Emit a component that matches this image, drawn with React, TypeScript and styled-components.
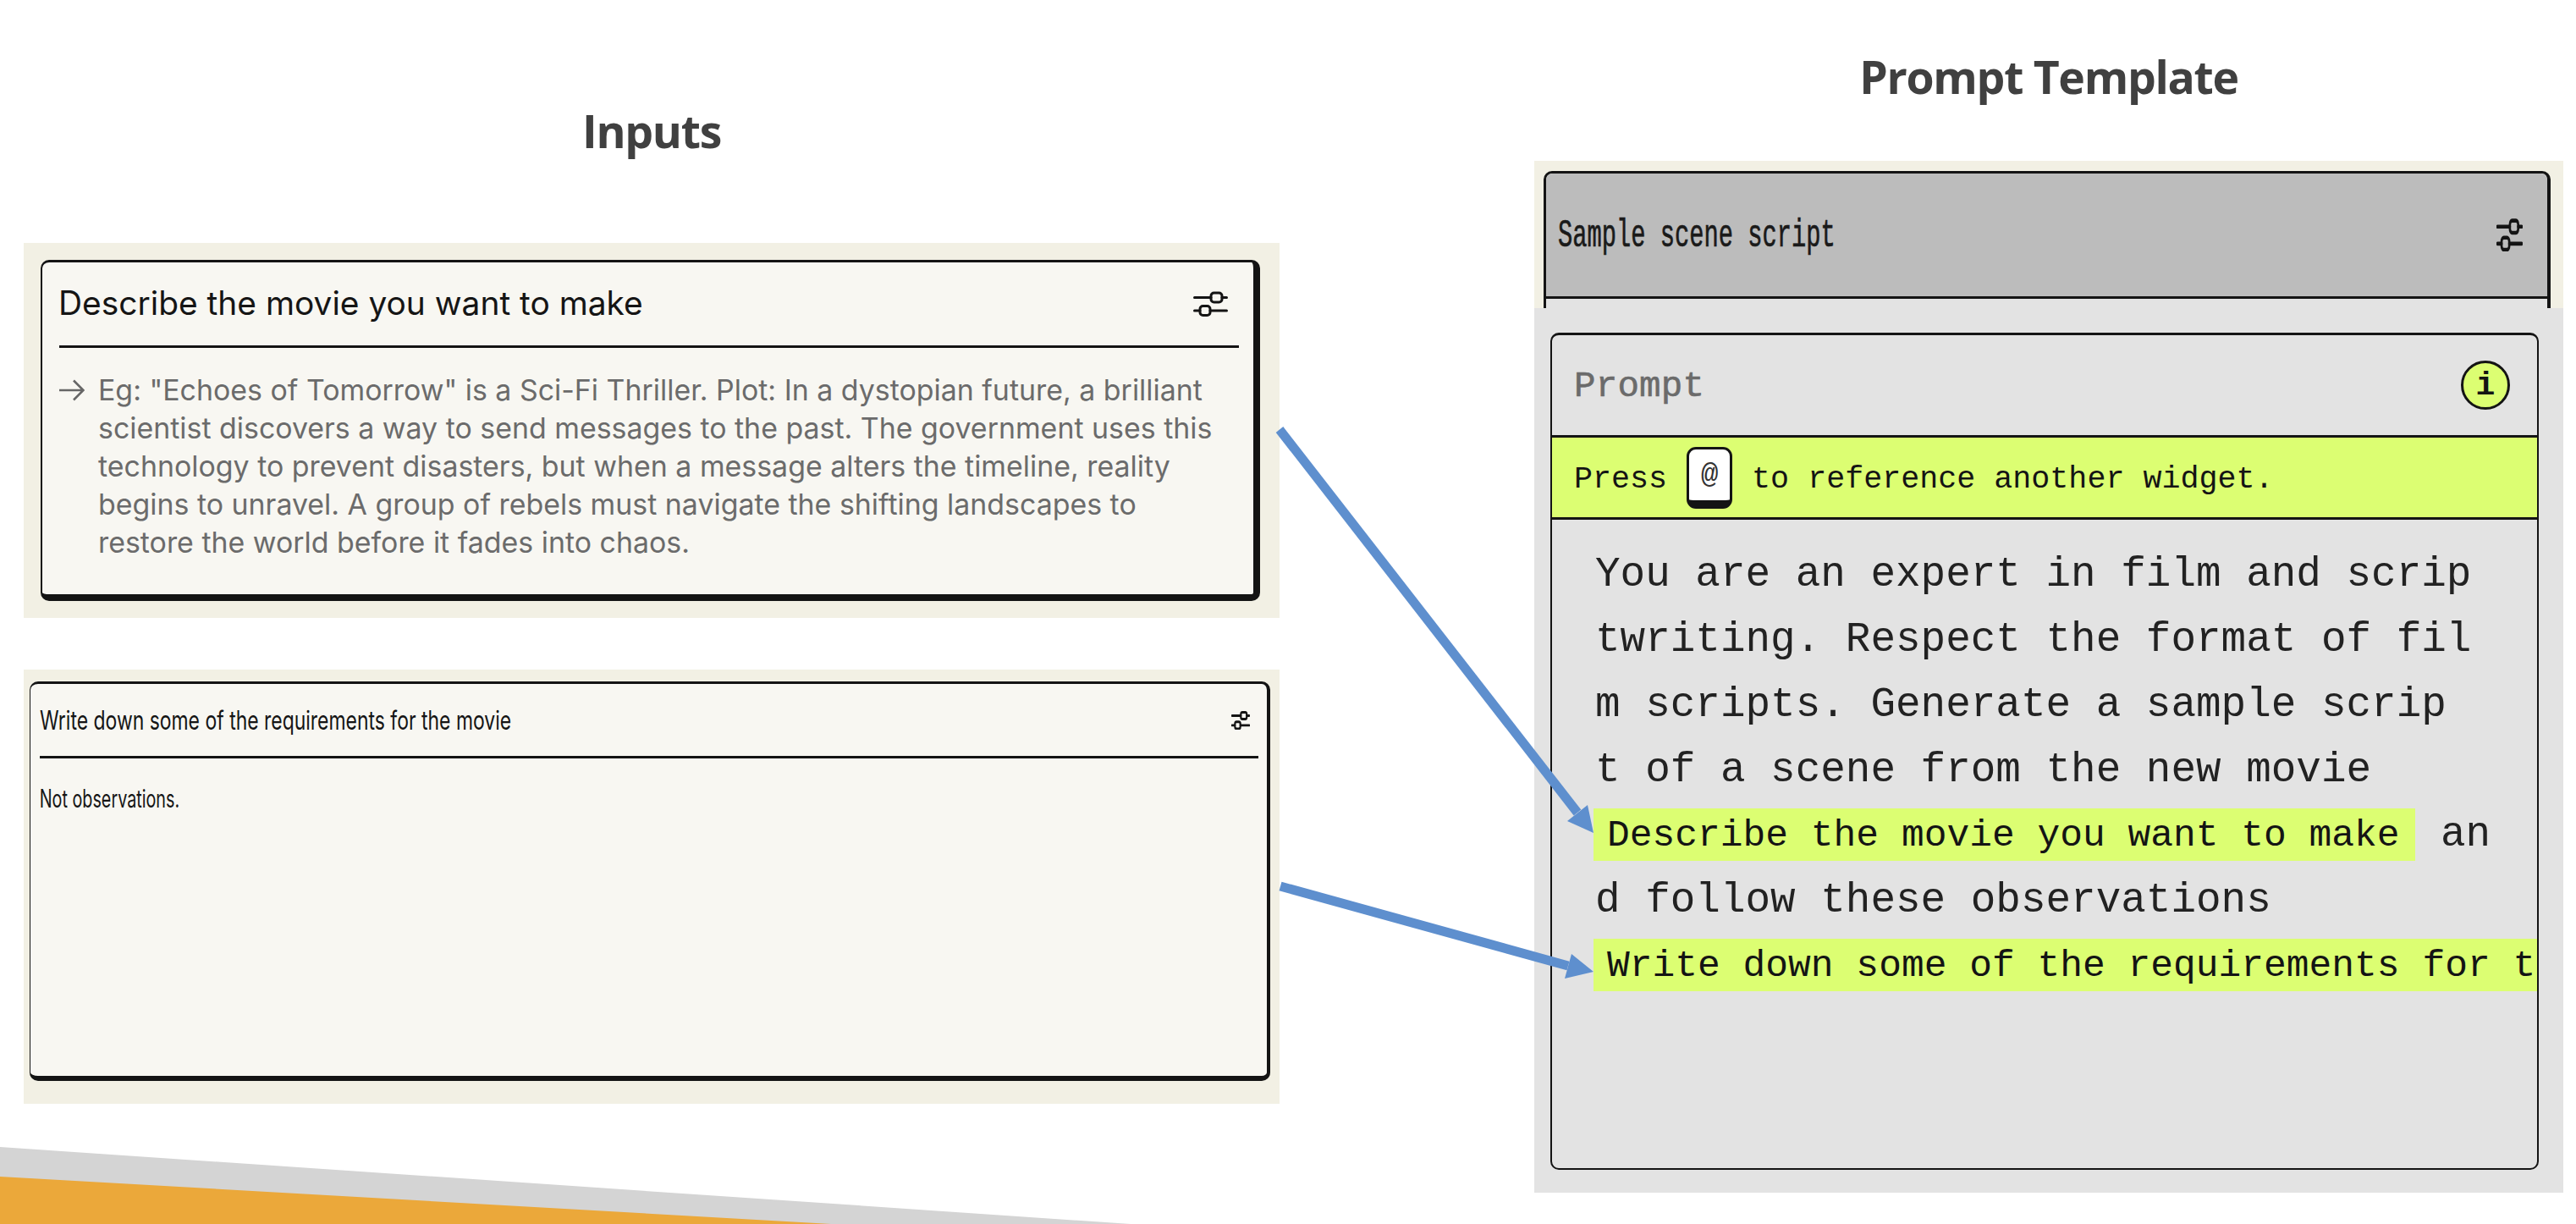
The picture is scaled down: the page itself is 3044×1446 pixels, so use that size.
import React from 'react';
import styled, { createGlobalStyle } from 'styled-components';

const GlobalStyle = createGlobalStyle`
  html, body {
    margin: 0;
    padding: 0;
    background: #ffffff;
  }
`;

const INK = '#141414';
const LIME = '#dcfe72';
const MONO = '"Liberation Mono", "DejaVu Sans Mono", monospace';

const Slide = styled.div`
  position: relative;
  width: 3044px;
  height: 1446px;
  overflow: hidden;
  background: #ffffff;
  display: flex;
  gap: 301px;
  padding-left: 28px;
  box-sizing: border-box;
`;

const LeftColumn = styled.div`
  width: 1484px;
  display: flex;
  flex-direction: column;
`;

const RightColumn = styled.div`
  width: 1216px;
  display: flex;
  flex-direction: column;
`;

const Heading = styled.h2<{ $height: number; $shift: number }>`
  margin: 0;
  height: ${(p) => p.$height}px;
  padding-top: ${(p) => p.$shift}px;
  box-sizing: border-box;
  font-family: "Open Sans", sans-serif;
  font-weight: 700;
  font-size: 53.5px;
  line-height: 68px;
  letter-spacing: -1.3px;
  color: #404040;
  text-align: center;
`;

const InputPanel = styled.section<{ $pad: string; $height: number; $mt?: number }>`
  height: ${(p) => p.$height}px;
  margin-top: ${(p) => p.$mt ?? 0}px;
  padding: ${(p) => p.$pad};
  box-sizing: border-box;
  background: #f2f0e4;
  display: flex;
`;

const InputCard = styled.div<{ $side: number; $edge: number; $foot: number }>`
  flex: 1;
  background: #f8f7f2;
  border: ${(p) => p.$side}px solid ${INK};
  border-top-width: 3px;
  border-right-width: ${(p) => p.$edge}px;
  border-bottom-width: ${(p) => p.$foot}px;
  border-radius: 10px;
`;

const InputHeader = styled.div<{ $height: number; $left: number; $right: number; $line: number }>`
  height: ${(p) => p.$height}px;
  margin: 0 ${(p) => p.$right}px 0 ${(p) => p.$left}px;
  border-bottom: ${(p) => p.$line}px solid ${INK};
  display: flex;
  align-items: center;
  justify-content: space-between;
`;

const IconSlot = styled.span<{ $right: number }>`
  display: flex;
  margin-right: ${(p) => p.$right}px;
`;

const LargeTitle = styled.span`
  margin-left: -1px;
  padding-bottom: 3px;
  font-family: Inter, sans-serif;
  font-size: 38.9px;
  color: #151515;
  white-space: nowrap;
`;

const SmallTitle = styled.span`
  font-family: Inter, sans-serif;
  font-size: 31px;
  color: #151515;
  white-space: nowrap;
  transform: scaleX(0.74);
  transform-origin: left center;
`;

const Hint = styled.div`
  display: flex;
  gap: 15px;
  padding: 27px 0 0 19px;
  font-family: Inter, sans-serif;
  font-size: 33.9px;
  line-height: 45px;
  color: #6b6b6b;
  white-space: nowrap;
`;

const HintArrow = styled.span`
  width: 32px;
  flex: none;
  display: flex;
  height: 45px;
  align-items: center;
`;

const InputValue = styled.div`
  padding: 27px 0 0 16px;
  font-family: Inter, sans-serif;
  font-size: 29.5px;
  line-height: 40px;
  color: #151515;
  white-space: nowrap;
  transform: scaleX(0.67);
  transform-origin: left center;
`;

const SamplePanel = styled.section`
  height: 174px;
  padding: 12px 15px 0 11px;
  box-sizing: border-box;
  background: #f2f0e4;
  overflow: hidden;
`;

const SampleCard = styled.div`
  height: 220px;
  background: #e3e3e3;
  border: 3px solid ${INK};
  border-right-width: 4px;
  border-radius: 10px;
`;

const SampleHeader = styled.div`
  height: 145px;
  padding: 0 29px 0 14px;
  background: #bcbcbc;
  border-bottom: 3px solid ${INK};
  border-radius: 8px 8px 0 0;
  display: flex;
  align-items: center;
  justify-content: space-between;
`;

const SampleTitle = styled.span`
  padding-top: 3px;
  font-family: ${MONO};
  font-size: 46px;
  color: #1a1a1a;
  -webkit-text-stroke: 0.7px #1a1a1a;
  white-space: nowrap;
  transform: scaleX(0.625);
  transform-origin: left center;
`;

const PromptPanel = styled.section`
  height: 1045px;
  padding: 29px 32px 27px 19px;
  box-sizing: border-box;
  background: #e3e3e3;
  display: flex;
`;

const PromptCard = styled.div`
  flex: 1;
  border: 2px solid ${INK};
  border-top-width: 3px;
  border-radius: 10px;
`;

const PromptHeader = styled.div`
  height: 118px;
  padding: 0 32px 0 26px;
  display: flex;
  align-items: center;
  justify-content: space-between;
`;

const PromptLabel = styled.span`
  padding-top: 3px;
  font-family: ${MONO};
  font-size: 42.5px;
  letter-spacing: 0.2px;
  color: #6b6b6b;
  -webkit-text-stroke: 0.6px #6b6b6b;
`;

const InfoBadge = styled.span`
  width: 58px;
  height: 58px;
  box-sizing: border-box;
  border: 3px solid ${INK};
  border-radius: 50%;
  background: ${LIME};
  display: flex;
  align-items: center;
  justify-content: center;
  font-family: ${MONO};
  font-weight: 700;
  font-size: 38px;
  color: ${INK};
`;

const NoticeBar = styled.div`
  height: 100px;
  box-sizing: border-box;
  padding-left: 26px;
  background: ${LIME};
  border-top: 3px solid ${INK};
  border-bottom: 3px solid ${INK};
  display: flex;
  align-items: center;
  gap: 23px;
  font-family: ${MONO};
  font-size: 36.7px;
  color: ${INK};
  white-space: nowrap;
`;

const NoticeText = styled.span`
  padding-top: 3px;
`;

const KeyCap = styled.span`
  width: 54px;
  height: 73px;
  box-sizing: border-box;
  background: #ffffff;
  border: 3px solid ${INK};
  border-bottom-width: 10px;
  border-radius: 11px;
  display: flex;
  align-items: center;
  justify-content: center;
  font-size: 34px;
  color: #333333;
`;

const PromptBody = styled.div`
  padding: 25px 0 0 51px;
  font-family: ${MONO};
  font-size: 49.3px;
  line-height: 77px;
  color: #222222;
`;

const BodyLine = styled.div`
  height: 77px;
  padding-top: 4px;
  box-sizing: border-box;
  display: flex;
  align-items: center;
  white-space: nowrap;
`;

const ChipLine = styled(BodyLine)`
  padding-top: 0;
`;

const WidgetChip = styled.span<{ $width: number }>`
  width: ${(p) => p.$width}px;
  height: 62px;
  flex: none;
  margin-left: -2px;
  padding-left: 16px;
  box-sizing: border-box;
  background: ${LIME};
  font-size: 44.6px;
  line-height: 64px;
  color: #141414;
`;

const ChipTail = styled.span`
  margin-left: 30px;
  padding-top: 2px;
`;

const Overlay = styled.svg`
  position: absolute;
  left: 0;
  top: 0;
  width: 3044px;
  height: 1446px;
  pointer-events: none;
`;

const SliderIcon = ({ width, height, stroke = 3 }: { width: number; height: number; stroke?: number }) => (
  <svg width={width} height={height} viewBox="0 0 41 30" preserveAspectRatio="none" fill="none">
    <g stroke={INK} strokeWidth={stroke} strokeLinecap="round">
      <path d="M1.5 7.5H21M34 7.5H39.5" />
      <path d="M1.5 23H8M20 23H39.5" />
    </g>
    <rect x="21" y="2" width="13" height="11" rx="3.5" stroke={INK} strokeWidth={stroke} />
    <rect x="8" y="17.5" width="12" height="11" rx="3.5" stroke={INK} strokeWidth={stroke} />
  </svg>
);

export default function App() {
  return (
    <>
      <GlobalStyle />
      <Slide>
        <LeftColumn>
          <Heading $height={287} $shift={121}>Inputs</Heading>
          <InputPanel $height={443} $pad="20px 23px 20px 20px">
            <InputCard $side={2} $edge={8} $foot={8}>
              <InputHeader $height={98} $left={20} $right={17} $line={3}>
                <LargeTitle>Describe the movie you want to make</LargeTitle>
                <IconSlot $right={13}>
                  <SliderIcon width={41} height={30} />
                </IconSlot>
              </InputHeader>
              <Hint>
                <HintArrow>
                  <svg width="31" height="28" viewBox="0 0 31 28" fill="none">
                    <path d="M1 14H29M18 2.5L29.5 14L18 25.5" stroke="#666666" strokeWidth="2.6" />
                  </svg>
                </HintArrow>
                <span>
                  Eg: &quot;Echoes of Tomorrow&quot; is a Sci-Fi Thriller. Plot: In a dystopian future, a brilliant<br />
                  scientist discovers a way to send messages to the past. The government uses this<br />
                  technology to prevent disasters, but when a message alters the timeline, reality<br />
                  begins to unravel. A group of rebels must navigate the shifting landscapes to<br />
                  restore the world before it fades into chaos.
                </span>
              </Hint>
            </InputCard>
          </InputPanel>
          <InputPanel $mt={61} $height={513} $pad="14px 11px 27px 7px">
            <InputCard $side={1.5} $edge={4} $foot={6}>
              <InputHeader $height={85} $left={11} $right={10} $line={3}>
                <SmallTitle>Write down some of the requirements for the movie</SmallTitle>
                <IconSlot $right={10}>
                  <SliderIcon width={22} height={22} stroke={4} />
                </IconSlot>
              </InputHeader>
              <InputValue>Not observations.</InputValue>
            </InputCard>
          </InputPanel>
        </LeftColumn>
        <RightColumn>
          <Heading $height={190} $shift={57}>Prompt Template</Heading>
          <SamplePanel>
            <SampleCard>
              <SampleHeader>
                <SampleTitle>Sample scene script</SampleTitle>
                <SliderIcon width={31} height={39} stroke={3.5} />
              </SampleHeader>
            </SampleCard>
          </SamplePanel>
          <PromptPanel>
            <PromptCard>
              <PromptHeader>
                <PromptLabel>Prompt</PromptLabel>
                <InfoBadge>i</InfoBadge>
              </PromptHeader>
              <NoticeBar>
                <NoticeText>Press</NoticeText>
                <KeyCap>@</KeyCap>
                <NoticeText>to reference another widget.</NoticeText>
              </NoticeBar>
              <PromptBody>
                <BodyLine>You are an expert in film and scrip</BodyLine>
                <BodyLine>twriting. Respect the format of fil</BodyLine>
                <BodyLine>m scripts. Generate a sample scrip</BodyLine>
                <BodyLine>t of a scene from the new movie</BodyLine>
                <ChipLine>
                  <WidgetChip $width={971}>Describe the movie you want to make</WidgetChip>
                  <ChipTail>an</ChipTail>
                </ChipLine>
                <BodyLine>d follow these observations</BodyLine>
                <ChipLine>
                  <WidgetChip $width={1115}>Write down some of the requirements for t</WidgetChip>
                </ChipLine>
              </PromptBody>
            </PromptCard>
          </PromptPanel>
        </RightColumn>
        <Overlay viewBox="0 0 3044 1446">
          <polygon points="0,1355 1336,1446 0,1446" fill="#d4d4d4" />
          <polygon points="0,1390 982,1446 0,1446" fill="#eba83a" />
          <g fill="#5e8fce">
            <polygon points="1516.3,504.1 1507.7,510.9 1859.7,963.4 1868.3,956.6" />
            <polygon points="1883,984 1852,970 1876,951" />
            <polygon points="1514.5,1041.7 1511.5,1052.3 1851.5,1146.3 1854.5,1135.7" />
            <polygon points="1883,1148 1849,1156 1857,1127" />
          </g>
        </Overlay>
      </Slide>
    </>
  );
}
